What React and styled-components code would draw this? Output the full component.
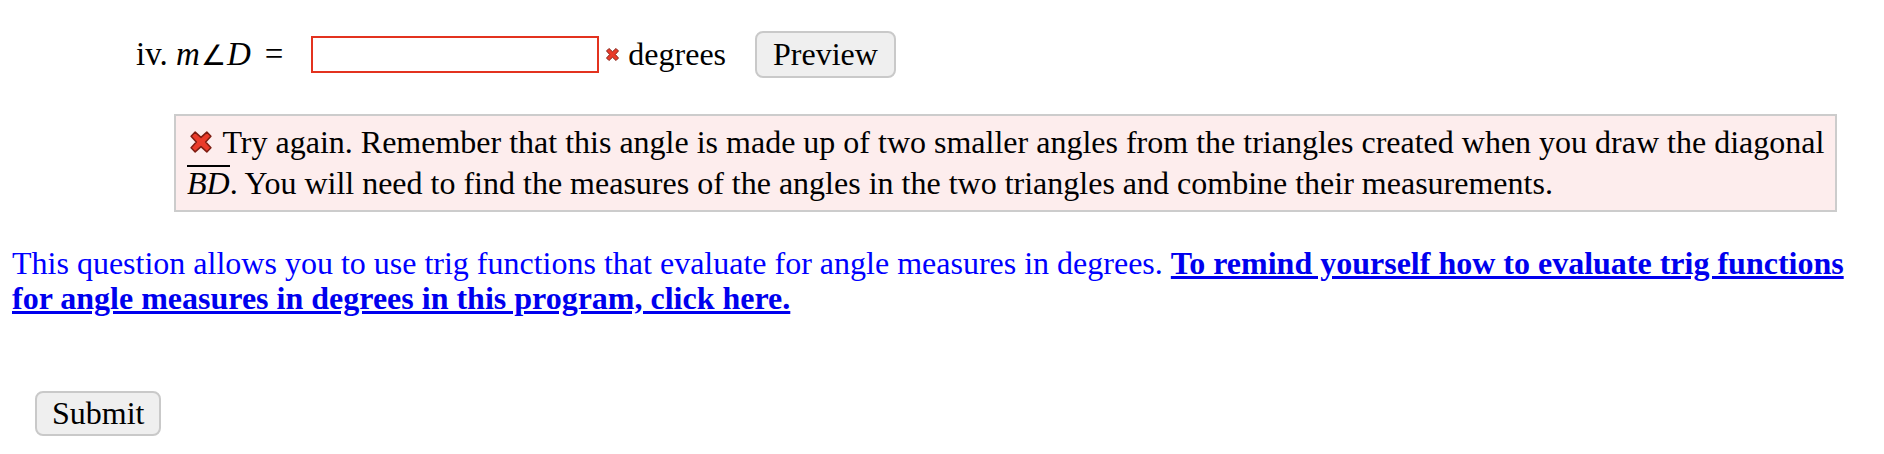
import styled, { createGlobalStyle } from "styled-components";

const GlobalStyle = createGlobalStyle`
  body {
    margin: 0;
    background: #ffffff;
    font-family: "Liberation Serif", "Times New Roman", serif;
    font-size: 32px;
    color: #000000;
  }
`;

const Page = styled.div`
  padding: 0 0 0 12px;
  width: 1864px;
`;

const QuestionRow = styled.div`
  display: flex;
  align-items: center;
  padding: 31px 0 0 124px;
  height: 47px;
`;

const Label = styled.span`
  white-space: pre;
  margin-right: 28px;
  font-size: 33px;
`;

const MathItalic = styled.span`
  font-style: italic;
`;

const Angle = styled.span`
  font-family: "DejaVu Sans", sans-serif;
  font-size: 28px;
  font-weight: 300;
  margin: 0 1px;
`;

const Eq = styled.span`
  margin-left: 14px;
`;

const AnswerInput = styled.input`
  box-sizing: border-box;
  width: 288px;
  height: 37px;
  border: 2px solid #e3321f;
  outline: none;
  background: #ffffff;
  font: inherit;
  padding: 0 6px;
`;

const Units = styled.span`
  display: flex;
  align-items: center;
  gap: 7px;
  margin-left: 5px;
`;

const GrayButton = styled.button`
  box-sizing: border-box;
  height: ${(p) => p.$h || 47}px;
  padding: 0 ${(p) => p.$px || 15}px;
  font-family: "Liberation Serif", "Times New Roman", serif;
  font-size: 32px;
  color: #000000;
  background: #efefef;
  border: 2px solid #c9c9c9;
  border-radius: 8px;
  margin-left: ${(p) => p.$ml || 0}px;
  cursor: pointer;
`;

const Feedback = styled.div`
  margin: 36px 39px 0 162px;
  padding: 6px 4px 6px 11px;
  background: #fdeded;
  border: 2px solid #cccccc;
  line-height: 41px;
`;

const Over = styled.span`
  font-style: italic;
  display: inline-block;
  border-top: 2px solid #000;
  line-height: 30px;
  padding-top: 1px;
`;

const Info = styled.p`
  margin: 34px 0 0;
  color: #0000ff;
  line-height: 35px;
  padding-right: 20px;
`;

const InfoLink = styled.a`
  color: #0000ee;
  font-weight: bold;
  text-decoration: underline;
`;

const SubmitRow = styled.div`
  padding: 75px 0 0 23px;
`;

const CrossIcon = ({ size = 16 }) => (
  <svg width={size} height={size} viewBox="0 0 24 24" style={{ verticalAlign: "-3px" }}>
    <path
      d="M3.5 7 L7 3.5 L12 8 L17 3.5 L20.5 7 L16 12 L20.5 17 L17 20.5 L12 16 L7 20.5 L3.5 17 L8 12 Z"
      fill="#ea3b2a"
      stroke="#7d1d12"
      strokeWidth="1.3"
      strokeLinejoin="round"
    />
  </svg>
);

export default function App() {
  return (
    <Page>
      <GlobalStyle />
      <QuestionRow>
        <Label>
          iv. <MathItalic>m</MathItalic>
          <Angle>∠</Angle>
          <MathItalic>D</MathItalic>
          <Eq>=</Eq>
        </Label>
        <AnswerInput type="text" aria-label="answer" />
        <Units>
          <CrossIcon size={17} />
          degrees
        </Units>
        <GrayButton $ml={29} $px={16}>Preview</GrayButton>
      </QuestionRow>
      <Feedback>
        <CrossIcon size={28} /> Try again. Remember that this angle is made up of two smaller angles
        from the triangles created when you draw the diagonal <Over>BD</Over>. You will need to find
        the measures of the angles in the two triangles and combine their measurements.
      </Feedback>
      <Info>
        This question allows you to use trig functions that evaluate for angle measures in degrees.{" "}
        <InfoLink href="#">
          To remind yourself how to evaluate trig functions for angle measures in degrees in this
          program, click here.
        </InfoLink>
      </Info>
      <SubmitRow>
        <GrayButton $h={45} $px={15}>Submit</GrayButton>
      </SubmitRow>
    </Page>
  );
}
